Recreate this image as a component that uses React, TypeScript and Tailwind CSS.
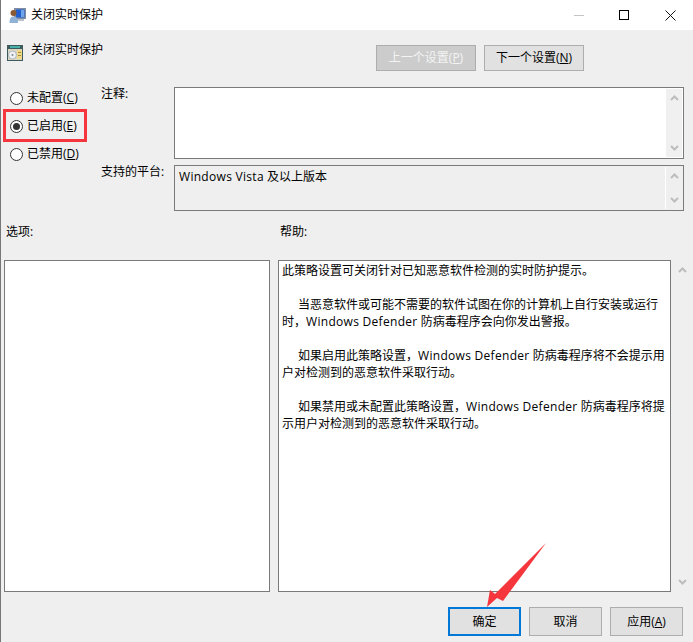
const font = "font-['Open_Sans','Noto_Sans_CJK_SC',sans-serif]";

function TitleIcon() {
  return (
    <svg width="17" height="17" viewBox="0 0 17 17" className="shrink-0">
      <rect x="5" y="1" width="12" height="11" fill="#7f8ea3" />
      <rect x="7" y="2.5" width="8.5" height="8" fill="#1f5fd0" />
      <rect x="12" y="3" width="3" height="7" fill="#6fa5ea" />
      <rect x="8" y="12" width="7" height="2" fill="#b9c2cc" />
      <circle cx="4.5" cy="6" r="3" fill="#8a5a34" />
      <path d="M0.5 16 C0.5 10.5 2.5 9.5 4.5 9.5 C7 9.5 9 11 9 16 Z" fill="#8fb2d6" />
    </svg>
  );
}

function PolicyIcon() {
  return (
    <svg width="16" height="16" viewBox="0 0 16 16" className="shrink-0">
      <rect x="0" y="0" width="16" height="16" fill="#3f5a5a" />
      <rect x="3" y="1" width="10" height="2" fill="#48b0a8" />
      <rect x="1" y="4" width="14" height="11" fill="#d9d6c4" />
      <circle cx="5.5" cy="10" r="4" fill="#eef0f2" stroke="#9aa3ad" strokeWidth="0.7" />
      <circle cx="5.5" cy="10" r="1" fill="#7b8794" />
      <rect x="10" y="5" width="5" height="9" fill="#f0d98a" />
      <rect x="11" y="7" width="3" height="1" fill="#a08a3c" />
      <rect x="11" y="10" width="3" height="1" fill="#a08a3c" />
    </svg>
  );
}

// latin runs are a little wider in the original UI font
function Latin({ children }: { children: React.ReactNode }) {
  return <span className="tracking-[0.3px]">{children}</span>;
}

function Radio({ label, hotkey, checked }: { label: string; hotkey: string; checked?: boolean }) {
  return (
    <div className="flex h-[14px] items-center text-[12px] text-black">
      <span className="flex h-[13px] w-[13px] shrink-0 items-center justify-center rounded-full border border-[#333] bg-white">
        {checked && <span className="h-[7px] w-[7px] rounded-full bg-[#333]" />}
      </span>
      <span className="ml-[4px] whitespace-nowrap">
        {label}(<u>{hotkey}</u>)
      </span>
    </div>
  );
}

function ScrollArrows({ className }: { className: string }) {
  return (
    <div className={`flex flex-col items-center justify-between ${className}`}>
      <svg width="9" height="6" viewBox="0 0 9 6">
        <path d="M1 5 L4.5 1.5 L8 5" fill="none" stroke="#bdbdbd" strokeWidth="2" />
      </svg>
      <svg width="9" height="6" viewBox="0 0 9 6">
        <path d="M1 1 L4.5 4.5 L8 1" fill="none" stroke="#bdbdbd" strokeWidth="2" />
      </svg>
    </div>
  );
}

function FootButton({ children, isDefault }: { children: React.ReactNode; isDefault?: boolean }) {
  return (
    <button
      className={`flex h-[29px] w-[73px] items-center justify-center bg-[#e1e1e1] text-[12px] text-black ${
        isDefault ? "border-2 border-[#0078d7]" : "border border-[#adadad]"
      }`}
    >
      {children}
    </button>
  );
}

export default function App() {
  return (
    <div className={`relative h-[642px] w-[693px] overflow-hidden border-l border-[#777] bg-[#efefef] ${font}`}>
      {/* title bar */}
      <div className="-ml-px flex h-[30px] items-center bg-white pl-[9px]">
        <TitleIcon />
        <span className="ml-[5px] text-[12px] text-black">关闭实时保护</span>
        <div className="ml-auto flex items-center pr-[17px]">
          <div className="h-px w-[10px] bg-[#c4c4c4]" />
          <div className="ml-[35px] h-[10px] w-[10px] border border-black" />
          <svg width="11" height="11" viewBox="0 0 11 11" className="ml-[36px]">
            <path d="M0.5 0.5 L10.5 10.5 M10.5 0.5 L0.5 10.5" stroke="#111" strokeWidth="1" />
          </svg>
        </div>
      </div>

      {/* heading + prev/next */}
      <div className="mt-[15px] flex h-[26px] items-start pl-[6px]">
        <PolicyIcon />
        <span className="-mt-[4px] ml-[8px] text-[12px] leading-[17px] text-black">关闭实时保护</span>
        <div className="ml-auto mr-[109px] flex gap-[8px]">
          <button className="h-[26px] w-[100px] border border-[#adadad] bg-[#cccccc] text-[12px] text-[#f4f4f4]">
            上一个设置(<u>P</u>)
          </button>
          <button className="h-[26px] w-[100px] border border-[#adadad] bg-[#e1e1e1] text-[12px] text-black">
            下一个设置(<u>N</u>)
          </button>
        </div>
      </div>

      {/* state + comment + platform */}
      <div className="mt-[16px] flex h-[124px]">
        <div className="ml-[9px] flex w-[91px] flex-col gap-[14px] pt-[4px]">
          <Radio label="未配置" hotkey="C" />
          <Radio label="已启用" hotkey="E" checked />
          <Radio label="已禁用" hotkey="D" />
        </div>
        <div className="-mt-[2px] flex w-[73px] flex-col text-[12px] text-black">
          <span className="leading-[17px]">注释:</span>
          <span className="mt-[61px] leading-[17px]">支持的平台:</span>
        </div>
        <div className="flex w-[510px] flex-col gap-[6px]">
          <div className="flex h-[72px] justify-end border border-[#7a7a7a] bg-white p-px">
            <ScrollArrows className="w-[16px] bg-[#f0f0f0] py-[6px]" />
          </div>
          <div className="flex h-[46px] justify-between border border-[#7a7a7a] bg-[#efefef] pl-[4px] pr-px pt-[2px]">
            <span className="text-[12px] leading-[17px] text-black">
              <Latin>Windows Vista</Latin> 及以上版本
            </span>
            <ScrollArrows className="-mt-[1px] mb-px w-[17px] border-l border-white py-[6px]" />
          </div>
        </div>
      </div>

      {/* options + help labels */}
      <div className="mt-[12px] flex text-[12px] leading-[17px] text-black">
        <span className="ml-[5px] w-[274px]">选项:</span>
        <span>帮助:</span>
      </div>

      {/* options + help panes */}
      <div className="mt-[20px] flex h-[332px]">
        <div className="ml-[3px] w-[266px] border border-[#7a7a7a] bg-white" />
        <div className="ml-[8px] w-[393px] border border-[#7a7a7a] bg-white pl-[3px] pt-[1px] text-[12px] leading-[17px] text-black">
          <p className="whitespace-nowrap">此策略设置可关闭针对已知恶意软件检测的实时防护提示。</p>
          <p className="mt-[17px] whitespace-nowrap indent-[16px]">
            当恶意软件或可能不需要的软件试图在你的计算机上自行安装或运行
            <br />
            时，<Latin>Windows Defender</Latin> 防病毒程序会向你发出警报。
          </p>
          <p className="mt-[17px] whitespace-nowrap indent-[16px]">
            如果启用此策略设置，<Latin>Windows Defender</Latin> 防病毒程序将不会提示用
            <br />
            户对检测到的恶意软件采取行动。
          </p>
          <p className="mt-[17px] whitespace-nowrap indent-[16px]">
            如果禁用或未配置此策略设置，<Latin>Windows Defender</Latin> 防病毒程序将提
            <br />
            示用户对检测到的恶意软件采取行动。
          </p>
        </div>
        <ScrollArrows className="ml-[3px] w-[16px] py-[7px]" />
      </div>

      {/* footer buttons */}
      <div className="mt-[15px] flex gap-[8px] pl-[447px]">
        <FootButton isDefault>确定</FootButton>
        <FootButton>取消</FootButton>
        <FootButton>
          <span>
            应用(<u>A</u>)
          </span>
        </FootButton>
      </div>

      {/* red annotations */}
      <div className="absolute left-[2px] top-[109px] h-[33px] w-[84px] border-[3px] border-[#f5363d]" />
      <svg width="693" height="642" viewBox="0 0 693 642" className="pointer-events-none absolute -left-px top-0">
        <path d="M546 543 L503 601 L497 598 L487 607 L490 590 L495 594 Z" fill="#f5363d" />
      </svg>
    </div>
  );
}
